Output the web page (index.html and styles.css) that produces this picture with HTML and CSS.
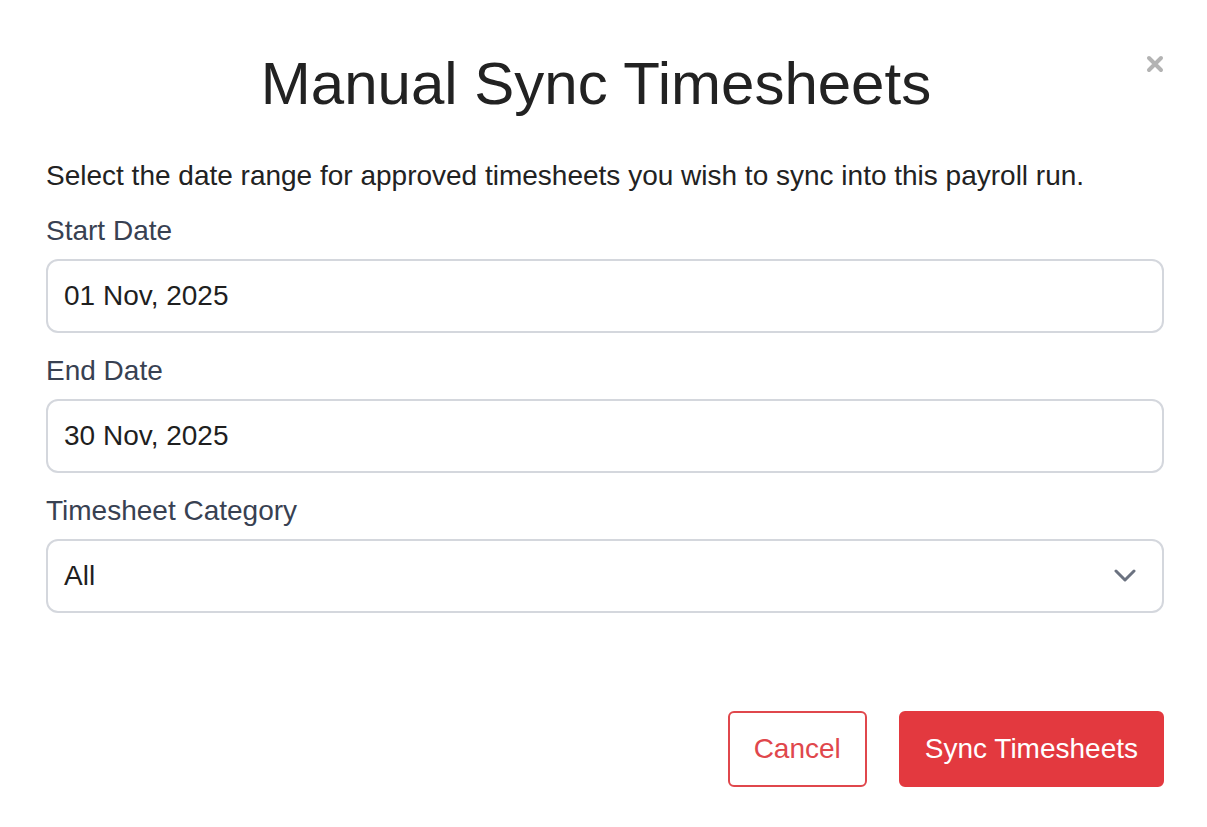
FILE: index.html
```html
<!DOCTYPE html>
<html lang="en">
<head>
<meta charset="utf-8">
<title>Manual Sync Timesheets</title>
<link rel="stylesheet" href="styles.css">
</head>
<body>
<div class="modal">
  <div class="modal-header">
    <h1 class="modal-title">Manual Sync Timesheets</h1>
    <button class="close-btn" aria-label="Close">
      <svg width="18" height="18" viewBox="0 0 18 18"><path d="M3 3 L15 15 M15 3 L3 15" stroke="#b3b3b3" stroke-width="4" stroke-linecap="round"/></svg>
    </button>
  </div>
  <p class="description">Select the date range for approved timesheets you wish to sync into this payroll run.</p>
  <div class="field">
    <label class="label">Start Date</label>
    <div class="input">01 Nov, 2025</div>
  </div>
  <div class="field">
    <label class="label">End Date</label>
    <div class="input">30 Nov, 2025</div>
  </div>
  <div class="field">
    <label class="label">Timesheet Category</label>
    <div class="input select">
      <span>All</span>
      <svg class="chevron" width="22" height="14" viewBox="0 0 22 14"><path d="M2 2 L11 11 L20 2" fill="none" stroke="#6b7280" stroke-width="3" stroke-linecap="round" stroke-linejoin="round"/></svg>
    </div>
  </div>
  <div class="actions">
    <button class="btn btn-outline">Cancel</button>
    <button class="btn btn-primary">Sync Timesheets</button>
  </div>
</div>
</body>
</html>
```

FILE: styles.css
```css
html, body {
  margin: 0;
  padding: 0;
  background: #ffffff;
}
body {
  font-family: "Liberation Sans", Arial, Helvetica, sans-serif;
  color: #222222;
}
.modal {
  padding: 48px 43px 0 46px;
}
.modal-header {
  display: flex;
  align-items: flex-start;
}
.modal-title {
  flex: 1;
  margin: 0;
  text-align: center;
  font-size: 60px;
  line-height: 72px;
  font-weight: 400;
  color: #222222;
}
.close-btn {
  width: 18px;
  height: 18px;
  margin-top: 7px;
  padding: 0;
  border: none;
  background: none;
  display: flex;
}
.description {
  margin: 36px 0 15px 0;
  font-size: 28px;
  line-height: 40px;
}
.field {
  margin-bottom: 18px;
}
.label {
  display: block;
  font-size: 28px;
  line-height: 40px;
  color: #384152;
  margin-bottom: 8px;
}
.input {
  box-sizing: border-box;
  height: 74px;
  border: 2px solid #d4d7dd;
  border-radius: 12px;
  padding: 0 16px;
  display: flex;
  align-items: center;
  font-size: 28px;
  color: #1f1f1f;
}
.select {
  justify-content: space-between;
  padding-right: 26px;
}
.chevron {
  display: block;
}
.actions {
  display: flex;
  justify-content: flex-end;
  gap: 32px;
  margin-top: 98px;
}
.btn {
  font-family: "Liberation Sans", Arial, Helvetica, sans-serif;
  font-size: 28px;
  line-height: 40px;
  padding: 16px 24px;
  border: 2px solid #e3393f;
  border-radius: 6px;
  cursor: pointer;
}
.btn-outline {
  background: #ffffff;
  color: #e0474c;
  border-color: #e0474c;
}
.btn-primary {
  background: #e3393f;
  color: #ffffff;
}
```
